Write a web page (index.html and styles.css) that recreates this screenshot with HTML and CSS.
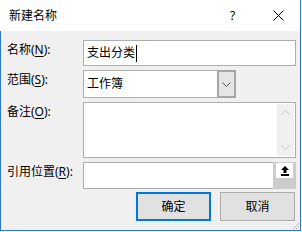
FILE: index.html
```html
<!DOCTYPE html>
<html lang="zh-CN">
<head>
<meta charset="utf-8">
<title>新建名称</title>
<link rel="stylesheet" href="styles.css">
</head>
<body>
<div class="window">
  <div class="titlebar">
    <span class="title">新建名称</span>
    <span class="help">?</span>
    <svg class="close" width="11" height="11" viewBox="0 0 11 11"><path d="M0.5 0.5L10.5 10.5M10.5 0.5L0.5 10.5" stroke="#000" stroke-width="1" fill="none"/></svg>
  </div>
  <div class="client">
    <div class="form">
      <div class="lbl">名称(<u>N</u>):</div>
      <div class="field"><span class="val">支出分类</span><span class="caret"></span></div>

      <div class="lbl">范围(<u>S</u>):</div>
      <div class="select">
        <div class="select-val"><span class="val">工作簿</span></div>
        <div class="select-btn"><svg width="9" height="5" viewBox="0 0 9 5"><path d="M0.5 0.5L4.5 4.5L8.5 0.5" stroke="#505050" stroke-width="1" fill="none"/></svg></div>
      </div>

      <div class="lbl">备注(<u>O</u>):</div>
      <div class="memo">
        <div class="memo-text"></div>
        <div class="vscroll">
          <div class="sbtn"><svg width="9" height="5" viewBox="0 0 9 5"><path d="M0.5 4.5L4.5 0.5L8.5 4.5" stroke="#c2c2c2" stroke-width="1" fill="none"/></svg></div>
          <div class="sbtn"><svg width="9" height="5" viewBox="0 0 9 5"><path d="M0.5 0.5L4.5 4.5L8.5 0.5" stroke="#c2c2c2" stroke-width="1" fill="none"/></svg></div>
        </div>
      </div>

      <div class="lbl">引用位置(<u>R</u>):</div>
      <div class="field ref">
        <div class="ref-text"></div>
        <div class="ref-btn"><div class="ref-face"><svg width="8" height="10" viewBox="0 0 8 10"><polygon points="4,0 8,4 5.5,4 5.5,7 2.5,7 2.5,4 0,4" fill="#000"/><rect x="0" y="8" width="8" height="2" fill="#000"/></svg></div></div>
      </div>
    </div>
    <div class="buttons">
      <div class="btn default">确定</div>
      <div class="btn">取消</div>
    </div>
    <svg class="grip" width="8" height="8" viewBox="0 0 8 8"><path d="M7 1L1 7M7 4L4 7M7 7L7 7" stroke="#b8b8b8" stroke-width="1" fill="none"/></svg>
  </div>
</div>
</body>
</html>
```

FILE: styles.css
```css
* { box-sizing: border-box; }
html, body { margin: 0; padding: 0; }
body {
  width: 302px;
  height: 232px;
  background: #ffffff;
  font-family: "Noto Sans", "Noto Sans CJK SC", sans-serif;
  font-size: 12px;
  line-height: 16px;
  color: #000;
  overflow: hidden;
}
.window {
  width: 301px;
  height: 231px;
  border-right: 1px solid #2b78c8;
  display: flex;
  flex-direction: column;
}
.titlebar {
  height: 31px;
  background: #fff;
  display: flex;
  align-items: center;
  padding-left: 9px;
  padding-right: 16px;
}
.title { flex: 1; }
.help { width: 7px; margin-right: 36px; }
.close { display: block; }
.client {
  position: relative;
  flex: 1;
  background: #f0f0f0;
  border-left: 1px solid #2b78c8;
  border-bottom: 1px solid #2b78c8;
  padding-top: 9px;
}
.form {
  display: grid;
  grid-template-columns: 82px 213px;
  row-gap: 4px;
}
.lbl {
  padding-left: 6px;
  padding-top: 2px;
  white-space: nowrap;
}
u { text-decoration-thickness: 1px; text-underline-offset: 2px; }
.field {
  height: 26px;
  background: #fff;
  border: 1px solid #adadad;
  display: flex;
  align-items: center;
  padding-left: 3px;
}
.caret {
  width: 1px;
  height: 17px;
  background: #000;
  margin-left: 1px;
}
.select {
  width: 153px;
  height: 28px;
  display: flex;
}
.select-val {
  flex: 1;
  background: #fff;
  border: 1px solid #adadad;
  border-right: none;
  display: flex;
  align-items: center;
  padding-left: 3px;
}
.select-btn {
  width: 19px;
  background: #e5e5e5;
  border: 2px solid #a6a6a6;
  display: flex;
  align-items: center;
  justify-content: center;
}
.select-btn svg { display: block; }
.memo {
  height: 56px;
  background: #fff;
  border: 1px solid #adadad;
  display: flex;
  padding: 1px 1px 1px 0;
}
.memo-text { flex: 1; }
.vscroll {
  width: 17px;
  background: #f0f0f0;
  display: flex;
  flex-direction: column;
  justify-content: space-between;
}
.sbtn {
  height: 17px;
  display: flex;
  align-items: center;
  justify-content: center;
}
.sbtn svg { display: block; }
.field.ref {
  height: 27px;
  padding-left: 0;
  align-items: stretch;
}
.ref-text { flex: 1; }
.ref-btn {
  width: 23px;
  margin: -1px -1px -1px 0;
  background: #cccccc;
  padding: 1px 3px 0 3px;
}
.ref-face {
  height: 15px;
  background: #fff;
  display: flex;
  align-items: center;
  justify-content: center;
}
.ref-face svg { display: block; }
.buttons {
  display: flex;
  justify-content: flex-end;
  gap: 9px;
  padding-right: 5px;
  margin-top: 3px;
}
.btn {
  width: 75px;
  height: 29px;
  background: #e1e1e1;
  border: 1px solid #adadad;
  display: flex;
  align-items: center;
  justify-content: center;
}
.btn.default { border: 2px solid #0078d7; }
.grip {
  position: absolute;
  right: 0;
  bottom: 0;
  display: block;
}
```
